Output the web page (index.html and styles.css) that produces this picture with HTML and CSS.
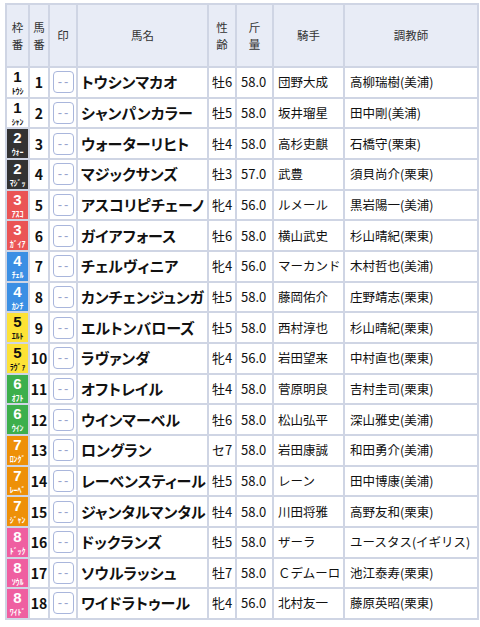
FILE: index.html
```html
<!DOCTYPE html>
<html lang="ja">
<head>
<meta charset="utf-8">
<link rel="stylesheet" href="styles.css">
</head>
<body>
<table class="race">
<colgroup>
<col class="c-waku"><col class="c-uma"><col class="c-mark"><col class="c-name"><col class="c-sex"><col class="c-kin"><col class="c-jockey"><col class="c-trainer">
</colgroup>
<thead>
<tr>
<th>枠<br>番</th><th>馬<br>番</th><th>印</th><th>馬名</th><th>性<br>齢</th><th>斤<br>量</th><th>騎手</th><th>調教師</th>
</tr>
</thead>
<tbody>
<tr><td class="waku w1"><b>1</b><span>ﾄｳｼ</span></td><td class="num">1</td><td class="mk"><span class="mark">--</span></td><td class="name">トウシンマカオ</td><td class="sex">牡6</td><td class="kin">58.0</td><td class="jk">団野大成</td><td class="tr">高柳瑞樹(美浦)</td></tr>
<tr><td class="waku w1"><b>1</b><span>ｼｬﾝ</span></td><td class="num">2</td><td class="mk"><span class="mark">--</span></td><td class="name">シャンパンカラー</td><td class="sex">牡5</td><td class="kin">58.0</td><td class="jk">坂井瑠星</td><td class="tr">田中剛(美浦)</td></tr>
<tr><td class="waku w2"><b>2</b><span>ｳｫｰ</span></td><td class="num">3</td><td class="mk"><span class="mark">--</span></td><td class="name">ウォーターリヒト</td><td class="sex">牡4</td><td class="kin">58.0</td><td class="jk">高杉吏麒</td><td class="tr">石橋守(栗東)</td></tr>
<tr><td class="waku w2"><b>2</b><span>ﾏｼﾞｯ</span></td><td class="num">4</td><td class="mk"><span class="mark">--</span></td><td class="name">マジックサンズ</td><td class="sex">牡3</td><td class="kin">57.0</td><td class="jk">武豊</td><td class="tr">須貝尚介(栗東)</td></tr>
<tr><td class="waku w3"><b>3</b><span>ｱｽｺ</span></td><td class="num">5</td><td class="mk"><span class="mark">--</span></td><td class="name">アスコリピチェーノ</td><td class="sex">牝4</td><td class="kin">56.0</td><td class="jk">ルメール</td><td class="tr">黒岩陽一(美浦)</td></tr>
<tr><td class="waku w3"><b>3</b><span>ｶﾞｲｱ</span></td><td class="num">6</td><td class="mk"><span class="mark">--</span></td><td class="name">ガイアフォース</td><td class="sex">牡6</td><td class="kin">58.0</td><td class="jk">横山武史</td><td class="tr">杉山晴紀(栗東)</td></tr>
<tr><td class="waku w4"><b>4</b><span>ﾁｪﾙ</span></td><td class="num">7</td><td class="mk"><span class="mark">--</span></td><td class="name">チェルヴィニア</td><td class="sex">牝4</td><td class="kin">56.0</td><td class="jk">マーカンド</td><td class="tr">木村哲也(美浦)</td></tr>
<tr><td class="waku w4"><b>4</b><span>ｶﾝﾁ</span></td><td class="num">8</td><td class="mk"><span class="mark">--</span></td><td class="name">カンチェンジュンガ</td><td class="sex">牡5</td><td class="kin">58.0</td><td class="jk">藤岡佑介</td><td class="tr">庄野靖志(栗東)</td></tr>
<tr><td class="waku w5"><b>5</b><span>ｴﾙﾄ</span></td><td class="num">9</td><td class="mk"><span class="mark">--</span></td><td class="name">エルトンバローズ</td><td class="sex">牡5</td><td class="kin">58.0</td><td class="jk">西村淳也</td><td class="tr">杉山晴紀(栗東)</td></tr>
<tr><td class="waku w5"><b>5</b><span>ﾗｳﾞｧ</span></td><td class="num">10</td><td class="mk"><span class="mark">--</span></td><td class="name">ラヴァンダ</td><td class="sex">牝4</td><td class="kin">56.0</td><td class="jk">岩田望来</td><td class="tr">中村直也(栗東)</td></tr>
<tr><td class="waku w6"><b>6</b><span>ｵﾌﾄ</span></td><td class="num">11</td><td class="mk"><span class="mark">--</span></td><td class="name">オフトレイル</td><td class="sex">牡4</td><td class="kin">58.0</td><td class="jk">菅原明良</td><td class="tr">吉村圭司(栗東)</td></tr>
<tr><td class="waku w6"><b>6</b><span>ｳｲﾝ</span></td><td class="num">12</td><td class="mk"><span class="mark">--</span></td><td class="name">ウインマーベル</td><td class="sex">牡6</td><td class="kin">58.0</td><td class="jk">松山弘平</td><td class="tr">深山雅史(美浦)</td></tr>
<tr><td class="waku w7"><b>7</b><span>ﾛﾝｸﾞ</span></td><td class="num">13</td><td class="mk"><span class="mark">--</span></td><td class="name">ロングラン</td><td class="sex">セ7</td><td class="kin">58.0</td><td class="jk">岩田康誠</td><td class="tr">和田勇介(美浦)</td></tr>
<tr><td class="waku w7"><b>7</b><span>ﾚｰﾍﾞ</span></td><td class="num">14</td><td class="mk"><span class="mark">--</span></td><td class="name">レーベンスティール</td><td class="sex">牡5</td><td class="kin">58.0</td><td class="jk">レーン</td><td class="tr">田中博康(美浦)</td></tr>
<tr><td class="waku w7"><b>7</b><span>ｼﾞｬﾝ</span></td><td class="num">15</td><td class="mk"><span class="mark">--</span></td><td class="name">ジャンタルマンタル</td><td class="sex">牡4</td><td class="kin">58.0</td><td class="jk">川田将雅</td><td class="tr">高野友和(栗東)</td></tr>
<tr><td class="waku w8"><b>8</b><span>ﾄﾞｯｸ</span></td><td class="num">16</td><td class="mk"><span class="mark">--</span></td><td class="name">ドックランズ</td><td class="sex">牡5</td><td class="kin">58.0</td><td class="jk">ザーラ</td><td class="tr">ユースタス(イギリス)</td></tr>
<tr><td class="waku w8"><b>8</b><span>ｿｳﾙ</span></td><td class="num">17</td><td class="mk"><span class="mark">--</span></td><td class="name">ソウルラッシュ</td><td class="sex">牡7</td><td class="kin">58.0</td><td class="jk">Ｃデムーロ</td><td class="tr">池江泰寿(栗東)</td></tr>
<tr><td class="waku w8"><b>8</b><span>ﾜｲﾄﾞ</span></td><td class="num">18</td><td class="mk"><span class="mark">--</span></td><td class="name">ワイドラトゥール</td><td class="sex">牝4</td><td class="kin">56.0</td><td class="jk">北村友一</td><td class="tr">藤原英昭(栗東)</td></tr>
</tbody>
</table>
</body>
</html>
```
FILE: styles.css
```css
html, body {
  margin: 0;
  padding: 0;
  background: #ffffff;
}
body {
  padding: 3px 0 0 5px;
  font-family: "Noto Sans CJK JP", "Noto Sans", sans-serif;
  color: #111;
}
.race {
  table-layout: fixed;
  width: 474px;
  border-collapse: separate;
  border-spacing: 2px;
  background: #cfd5e4;
}
.c-waku { width: 21px; }
.c-uma { width: 18px; }
.c-mark { width: 26px; }
.c-name { width: 129px; }
.c-sex { width: 26px; }
.c-kin { width: 35px; }
.c-jockey { width: 69px; }
.c-trainer { width: 132px; }

.race th {
  background: #e8ecf6;
  height: 61px;
  padding: 0;
  font-size: 11.5px;
  line-height: 17px;
  font-weight: normal;
  color: #333;
  text-align: center;
  vertical-align: middle;
}
.race td {
  background: #fff;
  height: 28.67px;
  padding: 0;
  font-size: 12.5px;
  line-height: 16px;
  white-space: nowrap;
  overflow: hidden;
  vertical-align: middle;
}
.race td.waku {
  text-align: center;
  line-height: 1;
  vertical-align: top;
}
.waku b {
  display: block;
  font-family: "Liberation Sans", sans-serif;
  font-size: 15px;
  line-height: 17px;
  font-weight: bold;
}
.waku span {
  display: block;
  font-size: 8px;
  line-height: 11.6px;
  font-weight: bold;
  letter-spacing: -0.2px;
}
.w1 { background: #fff !important; color: #111; }
.w2 { background: #333 !important; color: #fff; }
.w3 { background: #ea5455 !important; color: #fff; }
.w4 { background: #3b8fe4 !important; color: #fff; }
.w5 { background: #fde236 !important; color: #111; }
.w6 { background: #3daf4c !important; color: #fff; }
.w7 { background: #ee9008 !important; color: #fff; }
.w8 { background: #ef5fa1 !important; color: #fff; }

.race td.num {
  text-align: center;
  font-weight: bold;
  font-size: 14px;
}
.race td.mk {
  text-align: center;
}
.mark {
  display: inline-block;
  box-sizing: border-box;
  width: 21px;
  height: 22px;
  border: 1px solid #a9b6dc;
  border-radius: 4px;
  color: #97a3cc;
  font-family: "Liberation Sans", sans-serif;
  font-size: 13px;
  letter-spacing: 2px;
  text-indent: 2px;
  line-height: 19px;
  vertical-align: middle;
}
.race td.name {
  font-size: 15px;
  font-weight: bold;
  padding-left: 3px;
  font-feature-settings: "palt";
}
.race td.sex {
  font-size: 13px;
  padding-left: 3px;
}
.race td.kin {
  font-size: 13px;
  padding-left: 4px;
}
.race td.jk {
  padding-left: 4px;
}
.race td.tr {
  padding-left: 5px;
}
```
